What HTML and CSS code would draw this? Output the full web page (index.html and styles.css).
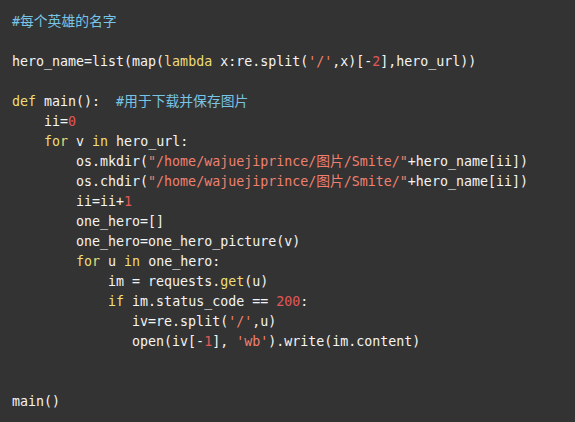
FILE: index.html
```html
<!DOCTYPE html>
<html lang="zh">
<head>
<meta charset="utf-8">
<title>code</title>
<link rel="stylesheet" href="styles.css">
</head>
<body>
<pre class="code"><span class="c">#<span class="cjk">每个英雄的名字</span></span>

hero_name=list(map(<span class="k">lambda</span> x:re.split(<span class="s">'/'</span>,x)[-<span class="n">2</span>],hero_url))

<span class="k">def</span> main():  <span class="c">#<span class="cjk">用于下载并保存图片</span></span>
    ii=<span class="n">0</span>
    <span class="k">for</span> v <span class="k">in</span> hero_url:
        os.mkdir(<span class="s">"/home/wajuejiprince/<span class="cjk">图片</span>/Smite/"</span>+hero_name[ii])
        os.chdir(<span class="s">"/home/wajuejiprince/<span class="cjk">图片</span>/Smite/"</span>+hero_name[ii])
        ii=ii+<span class="n">1</span>
        one_hero=[]
        one_hero=one_hero_picture(v)
        <span class="k">for</span> u <span class="k">in</span> one_hero:
            im = requests.<span class="k">get</span>(u)
            <span class="k">if</span> im.status_code == <span class="n">200</span>:
               iv=re.split(<span class="s">'/'</span>,u)
               open(iv[-<span class="n">1</span>], <span class="s">'wb'</span>).write(im.content)


main()</pre>
</body>
</html>
```
FILE: styles.css
```css
html, body {
  margin: 0;
  padding: 0;
  background: #333333;
  height: 100%;
}
.code {
  margin: 0;
  padding: 12px 12px;
  font-family: "DejaVu Sans Mono", "Noto Sans CJK SC", monospace;
  font-size: 13.3px;
  line-height: 20px;
  color: #f4f4f4;
  white-space: pre;
}
.cjk {
  font-family: "Noto Sans CJK SC", sans-serif;
  font-size: 13.8px;
  line-height: 0;
}
.k { color: #eedc78; }
.s { color: #ef8070; }
.n { color: #e05858; }
.c { color: #78c4e6; }
```
